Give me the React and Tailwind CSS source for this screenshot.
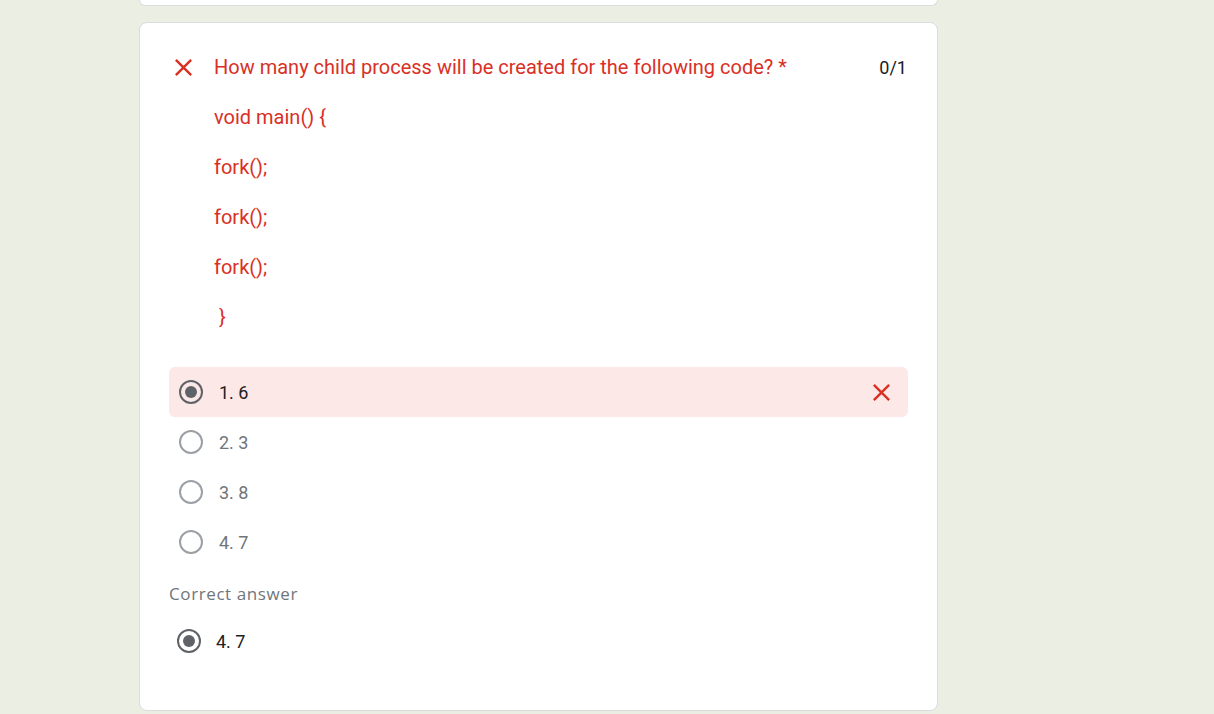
import React from "react";

function CloseIcon({ className }) {
  return (
    <svg viewBox="5 5 14 14" className={className} fill="currentColor">
      <path d="M19 6.41L17.59 5 12 10.59 6.41 5 5 6.41 10.59 12 5 17.59 6.41 19 12 13.41 17.59 19 19 17.59 13.41 12z" />
    </svg>
  );
}

function Radio({ checked }) {
  return (
    <div
      className={
        "flex h-6 w-6 shrink-0 items-center justify-center rounded-full border-2 " +
        (checked ? "border-[#5f6368]" : "border-[#9aa0a6]")
      }
    >
      {checked && <div className="h-3 w-3 rounded-full bg-[#5f6368]" />}
    </div>
  );
}

const options = [
  { label: "1. 6", picked: true },
  { label: "2. 3" },
  { label: "3. 8" },
  { label: "4. 7" },
];

const codeLines = ["void main() {", "fork();", "fork();", "fork();", "\u00a0}"];

export default function App() {
  return (
    <div className="min-h-screen bg-[#ebeee2] font-['Roboto',sans-serif]">
      <div className="ml-[139px] w-[799px]">
        {/* tail of the previous card */}
        <div className="h-[6px] rounded-b-lg border border-t-0 border-[#dadce0] bg-white" />

        <div className="mt-4 h-[689px] rounded-lg border border-[#dadce0] bg-white px-[29px] pt-[19px]">
          {/* question header */}
          <div className="flex h-[50px] items-center">
            <CloseIcon className="ml-[6px] h-[17px] w-[17px] shrink-0 text-[#d93025]" />
            <div className="ml-[22px] flex-1 text-[20px] text-[#d93025]">
              How many child process will be created for the following code? *
            </div>
            <div className="mr-px text-[18px] text-[#202124]">0/1</div>
          </div>

          {/* code in description */}
          <div className="pl-[45px] text-[20px] text-[#d93025]">
            {codeLines.map((l, i) => (
              <div key={i} className="flex h-[50px] items-center">
                {l}
              </div>
            ))}
          </div>

          {/* options */}
          <div className="mt-[25px]">
            {options.map((o) => (
              <div
                key={o.label}
                className={
                  "flex h-[50px] items-center rounded-md pl-[10px] pr-[18px] " +
                  (o.picked ? "bg-[#fce8e6]" : "")
                }
              >
                <Radio checked={o.picked} />
                <span
                  className={
                    "ml-4 flex-1 text-[18px] " +
                    (o.picked ? "text-[#202124]" : "text-[#70757a]")
                  }
                >
                  {o.label}
                </span>
                {o.picked && <CloseIcon className="h-[17px] w-[17px] text-[#d93025]" />}
              </div>
            ))}
          </div>

          {/* correct answer */}
          <div className="mt-[15px] flex h-6 items-center font-['Open_Sans',sans-serif] text-[17px] font-medium tracking-[0.6px] text-[#70757a]">
            Correct answer
          </div>
          <div className="mt-[10px] flex h-[50px] items-center pl-2">
            <Radio checked />
            <span className="ml-[15px] text-[18px] text-[#202124]">4. 7</span>
          </div>
        </div>
      </div>
    </div>
  );
}
